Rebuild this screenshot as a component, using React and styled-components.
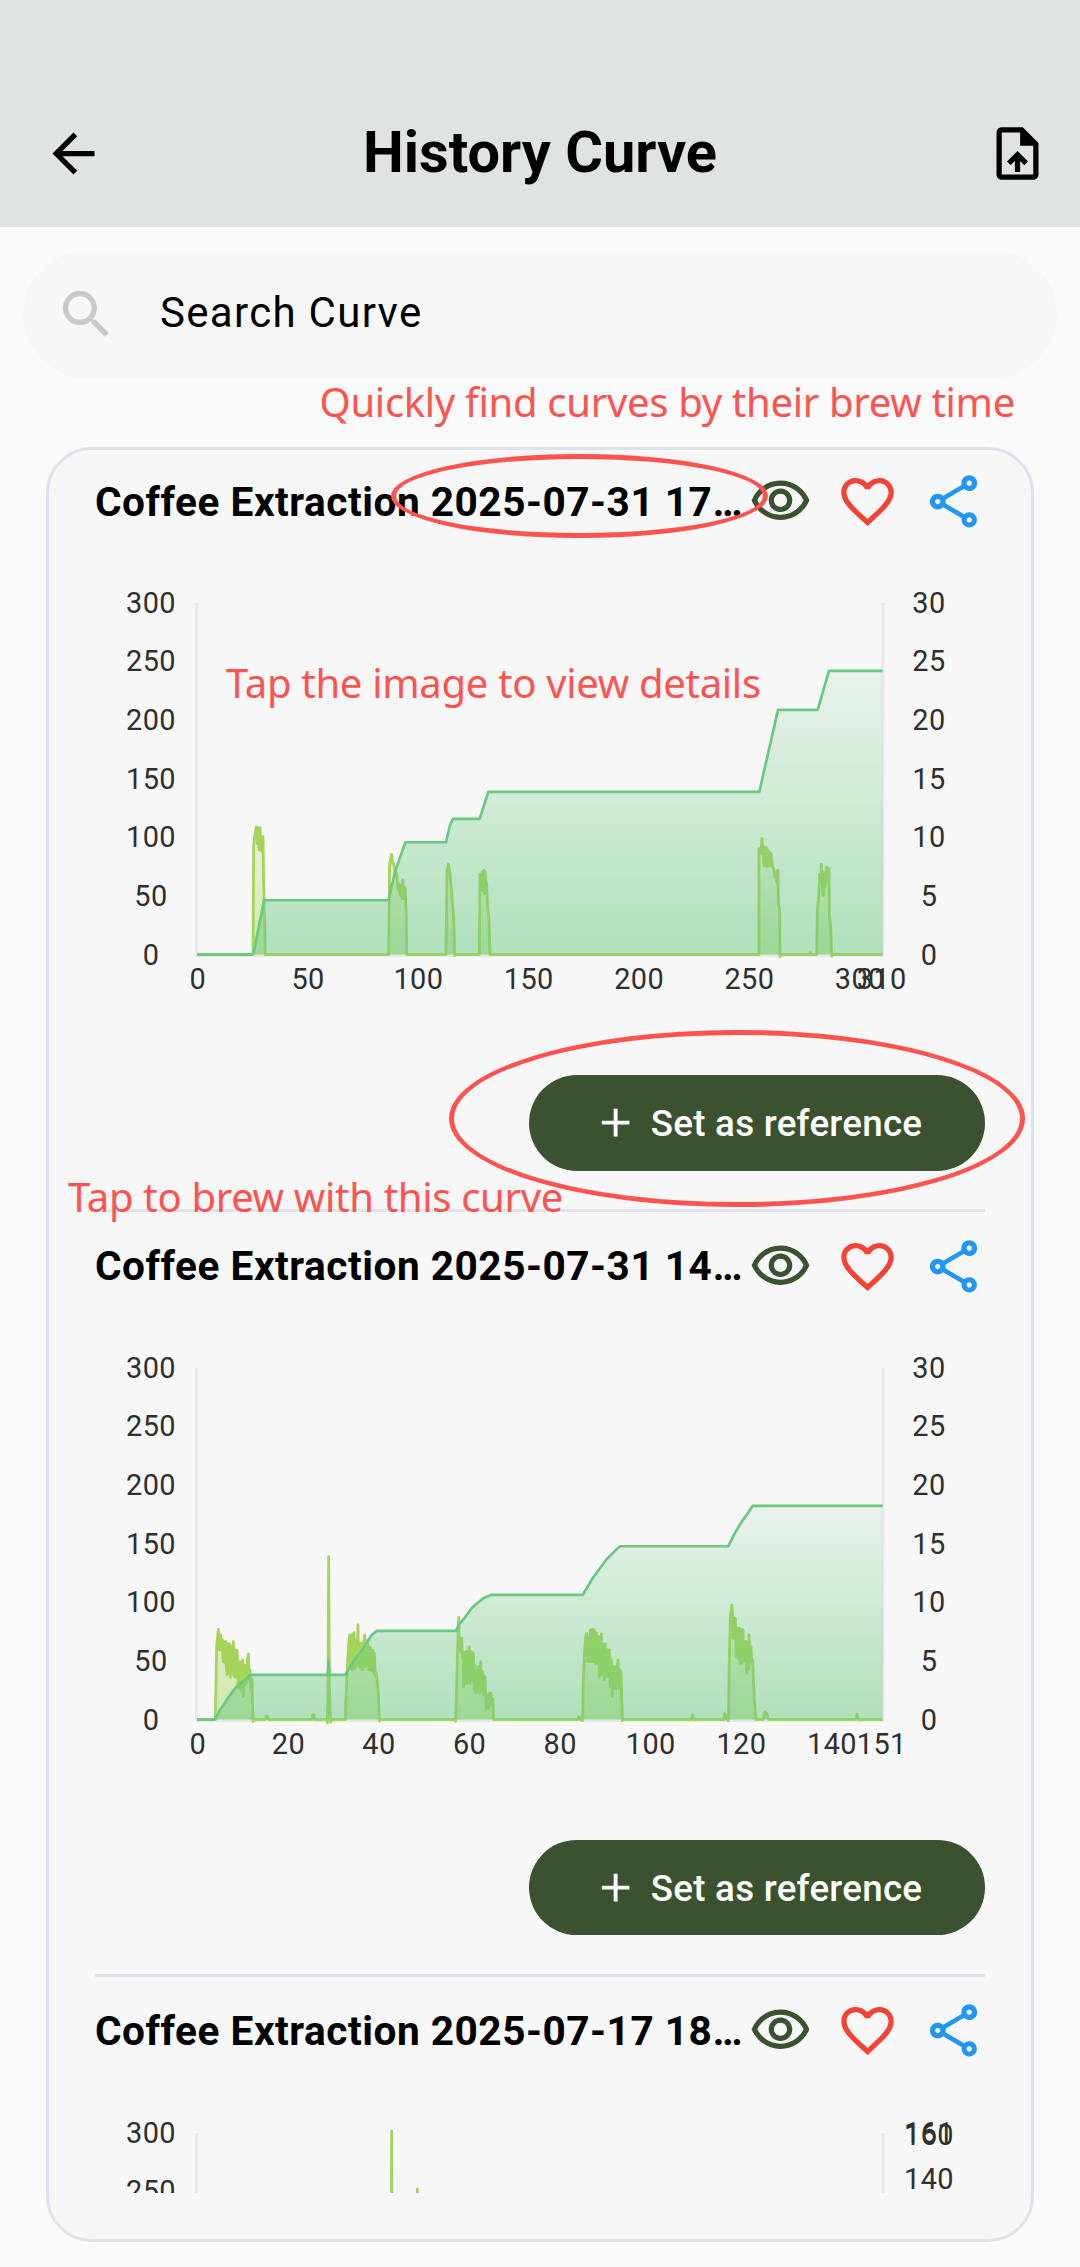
import React from 'react';
import styled, { createGlobalStyle } from 'styled-components';

const GlobalStyle = createGlobalStyle`
  *, *::before, *::after { box-sizing: border-box; }
  body {
    margin: 0;
    background: #fafafa;
    font-family: Roboto, "Liberation Sans", sans-serif;
    color: #000;
  }
`;

const Screen = styled.div`
  position: relative;
  width: 1080px;
  height: 2267px;
  overflow: hidden;
  background: #fafafa;
  display: flex;
  flex-direction: column;
`;

const AppBar = styled.header`
  flex: none;
  height: 227px;
  padding: 80px 31.5px 0 42px;
  background: #dfe3e4;
  display: grid;
  grid-template-columns: 63px 1fr 63px;
  align-items: center;
`;

const AppTitle = styled.h1`
  margin: 0;
  padding: 0 10.5px 3px 0;
  text-align: center;
  font-size: 57.75px;
  font-weight: 700;
  line-height: 68px;
  white-space: nowrap;
`;

const Glyph = styled.svg`
  display: block;
  flex: none;
  width: ${(p) => p.$size || 63}px;
  height: ${(p) => p.$size || 63}px;
  fill: ${(p) => p.$color || '#000'};
`;

const SearchBar = styled.div`
  flex: none;
  height: 127px;
  margin: 24px 23px 0;
  padding-left: 31.5px;
  border-radius: 63.5px;
  background: #f7f7f7;
  display: flex;
  align-items: center;
  gap: 42.5px;
`;

const SearchText = styled.span`
  padding-bottom: 3px;
  font-size: 42px;
  line-height: 50px;
  letter-spacing: 1.31px;
`;

const Card = styled.main`
  flex: none;
  height: 1795px;
  margin: 69px 46px 0;
  padding: 0 46px 46px;
  border: 3px solid #dde4ec;
  border-radius: 46px;
  background: #f7f7f7;
  display: flex;
`;

const List = styled.div`
  flex: 1;
  overflow: hidden;
`;

const Item = styled.section`
  height: 764.6px;
  padding-top: 20.3px;
  display: flex;
  flex-direction: column;
`;

const ItemHead = styled.div`
  height: 63px;
  display: flex;
  align-items: center;
`;

const ItemTitle = styled.h2`
  flex: 1;
  min-width: 0;
  margin: 0;
  font-size: 40.6px;
  font-weight: 700;
  line-height: 50px;
  letter-spacing: 0.52px;
  white-space: nowrap;
`;

const ItemIcons = styled.div`
  display: flex;
  gap: 23.5px;
`;

const ChartSvg = styled.svg`
  display: block;
  flex: none;
  margin-top: 37.1px;
  width: 890px;
  height: 440px;
`;

const AxisLabel = styled.text`
  font-family: Roboto, "Liberation Sans", sans-serif;
  font-size: 28.9px;
  letter-spacing: 0.4px;
  text-anchor: middle;
  fill: #2f2f2f;
`;

const Actions = styled.div`
  display: flex;
  justify-content: flex-end;
  margin-top: 64.7px;
`;

const PrimaryButton = styled.button`
  width: 456px;
  height: 95.7px;
  border: 0;
  padding: 0 0 0 62.5px;
  border-radius: 48px;
  background: #3a5230;
  color: #fff;
  font-family: inherit;
  font-size: 36.75px;
  font-weight: 500;
  line-height: 44px;
  letter-spacing: 0.26px;
  white-space: nowrap;
  display: flex;
  align-items: center;
  gap: 12px;
`;

const ButtonText = styled.span`
  padding-top: 2px;
`;

const Divider = styled.hr`
  width: 100%;
  height: 3px;
  margin: 38.2px 0 0;
  border: 0;
  background: #dde4ec;
`;

const Note = styled.p`
  position: absolute;
  left: ${(p) => p.$left}px;
  top: ${(p) => p.$top}px;
  margin: 0;
  font-family: "Noto Sans", "Open Sans", sans-serif;
  font-size: 40px;
  line-height: 56px;
  letter-spacing: -0.3px;
  color: #ff5350;
  white-space: nowrap;
`;

const Ring = styled.div`
  position: absolute;
  left: ${(p) => p.$left}px;
  top: ${(p) => p.$top}px;
  width: ${(p) => p.$width}px;
  height: ${(p) => p.$height}px;
  border: 5px solid #ff5350;
  border-radius: 50%;
`;

const icons = {
  back: 'M20 11H7.83l5.59-5.59L12 4l-8 8 8 8 1.41-1.41L7.83 13H20v-2z',
  upload:
    'M14 2H6c-1.1 0-1.99.9-1.99 2L4 20c0 1.1.89 2 1.99 2H18c1.1 0 2-.9 2-2V8l-6-6zm4 18H6V4h7v5h5v11zM8 15.01l1.41 1.41L11 14.84V19h2v-4.16l1.59 1.59L16 15.01 12.01 11 8 15.01z',
  search:
    'M15.5 14h-.79l-.28-.27C15.41 12.59 16 11.11 16 9.5 16 5.91 13.09 3 9.5 3S3 5.91 3 9.5 5.91 16 9.5 16c1.61 0 3.09-.59 4.23-1.57l.27.28v.79l5 4.99L20.49 19l-4.99-5zm-6 0C7.01 14 5 11.99 5 9.5S7.01 5 9.5 5 14 7.01 14 9.5 11.99 14 9.5 14z',
  eye: 'M12 6c3.79 0 7.17 2.13 8.82 5.5C19.17 14.87 15.79 17 12 17s-7.17-2.13-8.82-5.5C4.83 8.13 8.21 6 12 6m0-2C7 4 2.73 7.11 1 11.5 2.73 15.89 7 19 12 19s9.27-3.11 11-7.5C21.27 7.11 17 4 12 4zm0 5c1.38 0 2.5 1.12 2.5 2.5S13.38 14 12 14s-2.5-1.12-2.5-2.5S10.62 9 12 9m0-2c-2.48 0-4.5 2.02-4.5 4.5S9.52 16 12 16s4.5-2.02 4.5-4.5S14.48 7 12 7z',
  heart:
    'M16.5 3c-1.74 0-3.41.81-4.5 2.09C10.91 3.81 9.24 3 7.5 3 4.42 3 2 5.42 2 8.5c0 3.78 3.4 6.86 8.55 11.54L12 21.35l1.45-1.32C18.6 15.36 22 12.28 22 8.5 22 5.42 19.58 3 16.5 3zm-4.4 15.55l-.1.1-.1-.1C7.14 14.24 4 11.39 4 8.5 4 6.5 5.5 5 7.5 5c1.54 0 3.04.99 3.57 2.36h1.87C13.46 5.99 14.96 5 16.5 5c2 0 3.5 1.5 3.5 3.5 0 2.89-3.14 5.74-7.9 10.05z',
  share:
    'M18 16.08c-.76 0-1.44.3-1.96.77L8.91 12.7c.05-.23.09-.46.09-.7s-.04-.47-.09-.7l7.05-4.11c.54.5 1.25.81 2.04.81 1.66 0 3-1.34 3-3s-1.34-3-3-3-3 1.34-3 3c0 .24.04.47.09.7L8.04 9.81C7.5 9.31 6.79 9 6 9c-1.66 0-3 1.34-3 3s1.34 3 3 3c.79 0 1.5-.31 2.04-.81l7.12 4.16c-.05.21-.08.43-.08.65 0 1.61 1.31 2.92 2.92 2.92s2.92-1.31 2.92-2.92-1.31-2.92-2.92-2.92zM18 4c.55 0 1 .45 1 1s-.45 1-1 1-1-.45-1-1 .45-1 1-1zM6 13c-.55 0-1-.45-1-1s.45-1 1-1 1 .45 1 1-.45 1-1 1zm12 7.02c-.55 0-1-.45-1-1s.45-1 1-1 1 .45 1 1-.45 1-1 1z',
  plus: 'M19 13h-6v6h-2v-6H5v-2h6V5h2v6h6v2z',
};

function Icon({ name, color, size }) {
  return (
    <Glyph viewBox="0 0 24 24" $color={color} $size={size} aria-hidden="true">
      <path d={icons[name]} />
    </Glyph>
  );
}

/* Plot rectangle inside the chart drawing. */
const PLOT = { left: 102, right: 788, top: 33, bottom: 384.6 };

/* Samples are [x, height] pairs in thirds of a pixel from the plot origin. */
const at = ([x, h]) => `${(PLOT.left + x / 3).toFixed(2)} ${(PLOT.bottom - h / 3).toFixed(2)}`;
const linePath = (pts) => `M${pts.map(at).join('L')}`;
const areaPath = (pts) => `${linePath(pts)}L${at([pts[pts.length - 1][0], 0])}L${at([pts[0][0], 0])}Z`;
const crest = (pts) => PLOT.bottom - Math.max(...pts.map((p) => p[1])) / 3;

const brew1731 = {
  id: 'a',
  title: 'Coffee Extraction 2025-07-31 17…',
  left: { max: 300, ticks: [300, 250, 200, 150, 100, 50, 0] },
  right: { max: 30, ticks: [30, 25, 20, 15, 10, 5, 0] },
  bottom: { max: 310, ticks: [0, 50, 100, 150, 200, 250, 300, 310] },
  weight: [
    [0, 0], [169, 0], [201, 163], [575, 163], [594, 248], [625, 337], [747, 337], [759, 388],
    [768, 407], [848, 407], [874, 488], [1687, 488], [1743, 734], [1862, 734], [1896, 851], [2057, 851],
  ],
  flow: [
    [0, 0], [168, 0], [170, 323], [173, 358], [178, 383], [181, 333], [183, 381], [186, 315], [189, 381],
    [192, 311], [196, 353], [198, 353], [200, 213], [205, 0],
    [575, 0], [578, 273], [584, 301], [587, 273], [590, 273], [594, 248], [599, 243], [603, 193], [605, 213],
    [610, 178], [612, 208], [615, 168], [617, 225], [621, 168], [622, 203], [625, 198], [628, 113], [629, 0],
    [747, 0], [750, 248], [754, 271], [758, 253], [762, 208], [770, 113], [773, -3], [775, 0],
    [847, 0], [849, 241], [852, 193], [854, 243], [855, 193], [857, 248], [861, 253], [862, 183], [864, 248],
    [866, 223], [869, 213], [871, 153], [876, 103], [879, 0],
    [1686, 0], [1686, 318], [1691, 303], [1695, 348], [1698, 323], [1701, 268], [1703, 323], [1705, 265],
    [1708, 321], [1710, 265], [1712, 314], [1715, 265], [1718, 308], [1720, 268], [1722, 303], [1726, 265],
    [1730, 258], [1733, 233], [1735, 248], [1739, 218], [1743, 253], [1744, 153], [1748, 138], [1749, -7],
    [1751, 0],
    [1838, 0], [1840, 6], [1842, 0], [1859, 0], [1861, 133], [1865, 173], [1868, 241], [1871, 223], [1873, 271],
    [1877, 178], [1879, 233], [1880, 178], [1883, 248], [1885, 203], [1887, 223], [1889, 263], [1892, 228],
    [1896, 258], [1897, 123], [1901, 83], [1904, -5], [1906, 0], [2057, 0],
  ],
};

const brew1431 = {
  id: 'b',
  title: 'Coffee Extraction 2025-07-31 14…',
  left: { max: 300, ticks: [300, 250, 200, 150, 100, 50, 0] },
  right: { max: 30, ticks: [30, 25, 20, 15, 10, 5, 0] },
  bottom: { max: 151, ticks: [0, 20, 40, 60, 80, 100, 120, 140, 151] },
  weight: [
    [0, 0], [54, 0], [69, 29], [89, 59], [109, 87], [124, 104], [144, 119], [161, 134], [392, 134], [395, 176],
    [398, 134], [445, 134], [469, 174], [499, 214], [524, 254], [539, 266], [777, 266], [787, 287],
    [804, 307], [824, 334], [844, 352], [859, 364], [882, 374], [1157, 374], [1169, 394], [1189, 427],
    [1209, 454], [1229, 481], [1249, 501], [1269, 520], [1594, 520], [1609, 551], [1634, 594], [1654, 621],
    [1667, 641], [2057, 641],
  ],
  flow: [
    [0, 0], [55, 0], [59, 219], [64, 271], [67, 209], [71, 254], [74, 209], [76, 240], [78, 174], [80, 234],
    [83, 171], [86, 234], [88, 160], [90, 134], [93, 227], [95, 139], [97, 227], [100, 127], [103, 221],
    [106, 140], [109, 234], [111, 130], [113, 207], [115, 127], [118, 209], [121, 204], [123, 100], [125, 164],
    [127, 94], [129, 174], [131, 92], [133, 164], [135, 84], [137, 179], [139, 69], [142, 164], [144, 104],
    [147, 164], [149, 110], [151, 179], [154, 197], [157, 120], [159, 149], [162, 84], [165, 119], [168, -6],
    [170, 0],
    [206, 0], [208, 10], [212, 10], [214, 0], [345, 0], [347, 14], [351, 14], [353, 0],
    [389, 0], [391, -10], [393, 99], [395, 489], [397, 99], [401, -8], [403, 0],
    [445, 0], [449, 119], [455, 224], [458, 254], [461, 159], [463, 254], [466, 149], [469, 257], [471, 261],
    [474, 154], [477, 239], [480, 164], [483, 284], [485, 159], [487, 229], [490, 154], [493, 229], [497, 149],
    [500, 229], [503, 254], [505, 159], [507, 239], [510, 164], [512, 229], [515, 149], [517, 219], [519, 149],
    [521, 214], [524, 147], [527, 209], [530, 139], [532, 199], [535, 129], [538, 139], [540, 119], [544, 79],
    [547, -5], [549, 0],
    [775, 0], [776, -5], [781, 179], [785, 307], [787, 214], [789, 234], [791, 204], [794, 244], [796, 189],
    [798, 204], [800, 99], [803, 199], [806, 109], [808, 204], [810, 109], [814, 199], [817, 219], [819, 109],
    [823, 204], [826, 119], [829, 199], [832, 89], [834, 164], [836, 79], [839, 149], [842, 84], [845, 159],
    [848, 79], [851, 174], [854, 84], [857, 144], [860, 74], [864, 129], [868, 34], [871, 74], [875, 34],
    [878, 79], [882, 79], [885, 44], [887, 64], [890, 0],
    [1142, 0], [1145, 9], [1149, 0], [1157, -3], [1159, 119], [1163, 209], [1166, 249], [1169, 259],
    [1172, 174], [1175, 244], [1178, 174], [1180, 269], [1183, 174], [1186, 271], [1189, 174], [1192, 269],
    [1195, 169], [1198, 259], [1201, 169], [1204, 249], [1207, 129], [1210, 234], [1213, 257], [1216, 134],
    [1219, 227], [1222, 119], [1225, 227], [1228, 129], [1231, 209], [1234, 129], [1237, 209], [1240, 99],
    [1243, 179], [1246, 69], [1249, 159], [1253, 94], [1256, 159], [1259, 94], [1263, 179], [1266, 94],
    [1269, 149], [1272, 139], [1276, -3], [1278, 0],
    [1483, 0], [1487, 15], [1490, 0], [1581, 0], [1583, 18], [1590, 0], [1594, -3], [1597, 179], [1600, 309],
    [1605, 344], [1608, 244], [1611, 304], [1615, 304], [1617, 189], [1620, 274], [1623, 184], [1626, 274],
    [1629, 169], [1632, 271], [1635, 169], [1638, 269], [1641, 174], [1644, 234], [1647, 234], [1649, 139],
    [1652, 209], [1655, 149], [1656, 254], [1659, 174], [1662, 219], [1664, 169], [1667, 179], [1672, 59],
    [1677, 0], [1699, 0], [1704, 24], [1711, 15], [1714, 0], [1977, 0], [1980, 17], [1983, 0], [2057, 0],
  ],
};

const brew1817 = {
  id: 'c',
  title: 'Coffee Extraction 2025-07-17 18…',
  collapsed: true,
  left: { max: 300, ticks: [300, 250] },
  right: { max: 161, ticks: [161, 160, 140] },
  bottom: { max: 151, ticks: [] },
  weight: [[0, 0], [2057, 0]],
  flow: [
    [0, 0], [582, 0], [584, 1061], [587, 0], [657, 0], [661, 886], [665, 0], [2057, 0],
  ],
};

function Chart({ data }) {
  const { id, left, right, bottom, weight, flow } = data;
  const span = 352;
  const y = (v, max) => PLOT.bottom - (v / max) * span + 10.2;
  return (
    <ChartSvg viewBox="0 0 890 440" role="img" aria-label={data.title}>
      <defs>
        <linearGradient id={`w-${id}`} gradientUnits="userSpaceOnUse" x1="0" x2="0" y1={crest(weight)} y2={PLOT.bottom}>
          <stop offset="0" stopColor="#69c980" stopOpacity="0.1" />
          <stop offset="1" stopColor="#69c980" stopOpacity="0.5" />
        </linearGradient>
        <linearGradient id={`f-${id}`} gradientUnits="userSpaceOnUse" x1="0" x2="0" y1={crest(flow)} y2={PLOT.bottom}>
          <stop offset="0" stopColor="#a5d45a" stopOpacity="0.1" />
          <stop offset="1" stopColor="#a5d45a" stopOpacity="0.5" />
        </linearGradient>
      </defs>
      <path
        d={`M${PLOT.left - 0.3} ${PLOT.top}V${PLOT.bottom + 1}H${PLOT.right}V${PLOT.top}`}
        fill="none"
        stroke="#e7e7e7"
        strokeWidth="2.7"
      />
      <path d={areaPath(flow)} fill={`url(#f-${id})`} />
      <path d={linePath(flow)} fill="none" stroke="#a5d45a" strokeWidth="2.8" strokeLinejoin="round" />
      <path d={areaPath(weight)} fill={`url(#w-${id})`} />
      <path d={linePath(weight.slice(0, 2))} fill="none" stroke="#69c980" strokeWidth="2.7" />
      <path
        d={linePath(weight.slice(1))}
        fill="none"
        stroke="#69c980"
        strokeWidth="2.7"
        strokeLinejoin="round"
      />
      {left.ticks.map((v) => (
        <AxisLabel key={`l${v}`} x="56" y={y(v, left.max)}>{v}</AxisLabel>
      ))}
      {right.ticks.map((v) => (
        <AxisLabel key={`r${v}`} x="834" y={y(v, right.max)}>{v}</AxisLabel>
      ))}
      {bottom.ticks.map((v) => (
        <AxisLabel key={`b${v}`} x={102.8 + (v / bottom.max) * 684} y="418.8">{v}</AxisLabel>
      ))}
    </ChartSvg>
  );
}

function BrewItem({ data }) {
  return (
    <Item>
      <ItemHead>
        <ItemTitle>{data.title}</ItemTitle>
        <ItemIcons>
          <Icon name="eye" color="#3a5230" />
          <Icon name="heart" color="#f44336" />
          <Icon name="share" color="#2196f3" />
        </ItemIcons>
      </ItemHead>
      <Chart data={data} />
      {!data.collapsed && (
        <>
          <Actions>
            <PrimaryButton>
              <Icon name="plus" color="#fff" size={47.25} />
              <ButtonText>Set as reference</ButtonText>
            </PrimaryButton>
          </Actions>
          <Divider />
        </>
      )}
    </Item>
  );
}

export default function App() {
  return (
    <>
      <GlobalStyle />
      <Screen>
        <AppBar>
          <Icon name="back" />
          <AppTitle>History Curve</AppTitle>
          <Icon name="upload" />
        </AppBar>
        <SearchBar>
          <Icon name="search" color="#c9c9c9" />
          <SearchText>Search Curve</SearchText>
        </SearchBar>
        <Card>
          <List>
            <BrewItem data={brew1731} />
            <BrewItem data={brew1431} />
            <BrewItem data={brew1817} />
          </List>
        </Card>

        <Note $left={319.5} $top={374}>Quickly find curves by their brew time</Note>
        <Note $left={226} $top={655}>Tap the image to view details</Note>
        <Note $left={68} $top={1169}>Tap to brew with this curve</Note>
        <Ring $left={390.5} $top={453.5} $width={377.5} $height={84.5} />
        <Ring $left={449} $top={1029.5} $width={576} $height={177.5} />
      </Screen>
    </>
  );
}
